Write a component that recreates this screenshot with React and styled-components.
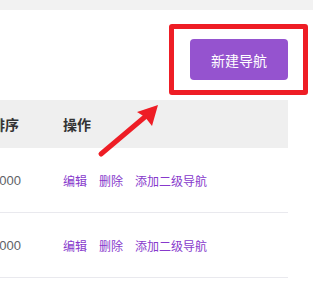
import React from "react";
import styled, { createGlobalStyle } from "styled-components";

const rows = [
  { sort: "1000", id: 1 },
  { sort: "1000", id: 2 },
];

function App() {
  return (
    <Page>
      <GlobalStyle />
      <TopBar />
      <Toolbar>
        <Highlight>
          <PrimaryButton>新建导航</PrimaryButton>
        </Highlight>
      </Toolbar>
      <Table>
        <HeadRow>
          <Cell>排序</Cell>
          <Cell>操作</Cell>
        </HeadRow>
        {rows.map((row) => (
          <BodyRow key={row.id}>
            <NumCell>{row.sort}</NumCell>
            <Cell>
              <Actions>
                <LinkText>编辑</LinkText>
                <LinkText>删除</LinkText>
                <LinkText>添加二级导航</LinkText>
              </Actions>
            </Cell>
          </BodyRow>
        ))}
      </Table>
      <Arrow width="70" height="60" viewBox="95 100 70 60">
        <line
          x1="101"
          y1="154"
          x2="146"
          y2="116"
          stroke="#ee1d25"
          strokeWidth="5"
          strokeLinecap="round"
        />
        <polygon points="158,105 137,112 145,117 152,126" fill="#ee1d25" />
      </Arrow>
    </Page>
  );
}

const GlobalStyle = createGlobalStyle`
  body {
    margin: 0;
    background: #fff;
    font-family: "Noto Sans CJK SC", "Noto Sans", sans-serif;
    overflow: hidden;
  }
`;

const Page = styled.div`
  position: relative;
  width: 313px;
  height: 301px;
  overflow: hidden;
`;

const TopBar = styled.div`
  height: 10px;
  background-color: #f2f2f2;
`;

const Toolbar = styled.div`
  display: flex;
  justify-content: flex-end;
  padding: 14px 5px 0 0;
`;

const Highlight = styled.div`
  display: flex;
  padding: 10px 15px 10px 16px;
  border: 5px solid #ee1d25;
  border-radius: 3px;
`;

const PrimaryButton = styled.button`
  width: 98px;
  height: 41px;
  border: none;
  border-radius: 4px;
  background-color: #9553cf;
  color: #fff;
  font-family: inherit;
  font-size: 14px;
  padding: 0;
`;

const Table = styled.div`
  margin: 5px 25px 0 -21px;
`;

const HeadRow = styled.div`
  display: grid;
  grid-template-columns: 72px 1fr;
  align-items: center;
  height: 48px;
  background-color: #efefef;
  font-size: 14px;
  font-weight: 700;
  color: #333;
`;

const BodyRow = styled.div`
  display: grid;
  grid-template-columns: 72px 1fr;
  align-items: center;
  height: 64px;
  border-bottom: 1px solid #e9e9ee;
  font-size: 12px;
  color: #606266;
`;

const Cell = styled.div`
  padding-left: 12px;
  white-space: nowrap;
`;

const NumCell = styled(Cell)`
  font-family: "Liberation Sans", Arial, sans-serif;
  font-size: 13px;
  padding-left: 13px;
`;

const Actions = styled.div`
  display: flex;
  gap: 12px;
`;

const LinkText = styled.span`
  color: #8739cc;
  cursor: pointer;
`;

const Arrow = styled.svg`
  position: absolute;
  left: 95px;
  top: 100px;
`;

export default App;
